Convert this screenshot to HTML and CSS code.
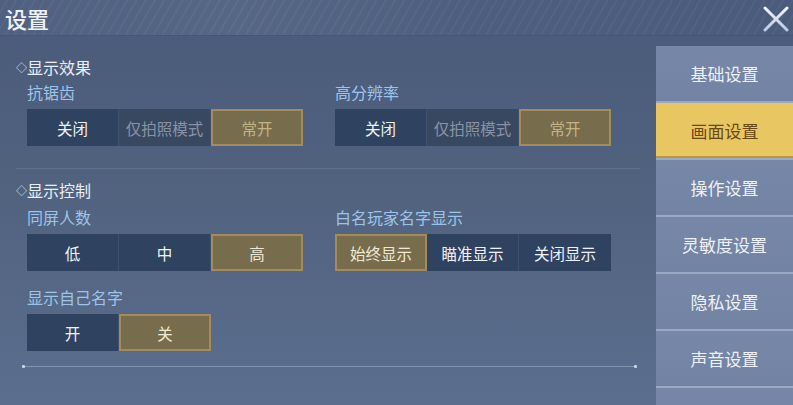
FILE: index.html
```html
<!DOCTYPE html>
<html lang="zh">
<head>
<meta charset="utf-8">
<link rel="stylesheet" href="styles.css">
</head>
<body>
<div class="app">
  <header class="topbar">
    <h1 class="title">设置</h1>
    <button class="close" aria-label="关闭">
      <svg width="26" height="26" viewBox="0 0 26 26">
        <defs>
          <linearGradient id="xg" x1="0" y1="0" x2="0" y2="1">
            <stop offset="0" stop-color="#f2f6fb"/>
            <stop offset="1" stop-color="#b9cbe3"/>
          </linearGradient>
        </defs>
        <path d="M2 2 L24 24 M24 2 L2 24" stroke="url(#xg)" stroke-width="3" stroke-linecap="round" fill="none"/>
      </svg>
    </button>
  </header>
  <div class="main">
    <section class="content">
      <div class="group">
        <h2 class="group-title"><span class="dia">◇</span>显示效果</h2>
        <div class="grid">
          <div class="field">
            <div class="label">抗锯齿</div>
            <div class="seg">
              <span class="opt">关闭</span>
              <span class="opt dis">仅拍照模式</span>
              <span class="opt on dim">常开</span>
            </div>
          </div>
          <div class="field">
            <div class="label">高分辨率</div>
            <div class="seg">
              <span class="opt">关闭</span>
              <span class="opt dis">仅拍照模式</span>
              <span class="opt on dim">常开</span>
            </div>
          </div>
        </div>
      </div>
      <hr class="divider">
      <div class="group">
        <h2 class="group-title"><span class="dia">◇</span>显示控制</h2>
        <div class="grid">
          <div class="field">
            <div class="label">同屏人数</div>
            <div class="seg">
              <span class="opt">低</span>
              <span class="opt">中</span>
              <span class="opt on">高</span>
            </div>
          </div>
          <div class="field">
            <div class="label">白名玩家名字显示</div>
            <div class="seg">
              <span class="opt on">始终显示</span>
              <span class="opt">瞄准显示</span>
              <span class="opt">关闭显示</span>
            </div>
          </div>
          <div class="field">
            <div class="label">显示自己名字</div>
            <div class="seg">
              <span class="opt">开</span>
              <span class="opt on">关</span>
            </div>
          </div>
        </div>
      </div>
      <div class="endline"><i class="dot"></i><i class="dot"></i></div>
    </section>
    <nav class="side">
      <a class="tab">基础设置</a>
      <a class="tab active">画面设置</a>
      <a class="tab">操作设置</a>
      <a class="tab">灵敏度设置</a>
      <a class="tab">隐私设置</a>
      <a class="tab">声音设置</a>
      <a class="tab"></a>
    </nav>
  </div>
</div>
</body>
</html>
```
FILE: styles.css
```css
* { box-sizing: border-box; }
html, body { margin: 0; padding: 0; }
body {
  width: 793px;
  height: 405px;
  overflow: hidden;
  font-family: "Noto Sans CJK SC", "Noto Sans", sans-serif;
  background: linear-gradient(180deg, #4a5b7b 0%, #51627f 45%, #5b6e8d 100%);
  color: #e6ecf4;
}
.app { width: 793px; height: 405px; display: flex; flex-direction: column; overflow: hidden; }
.topbar {
  height: 36px;
  flex: none;
  display: flex;
  align-items: center;
  justify-content: space-between;
  padding: 0 3px 0 5px;
  background:
    repeating-linear-gradient(120deg, rgba(255,255,255,0) 0px, rgba(255,255,255,0) 5px, rgba(255,255,255,0.05) 6px, rgba(255,255,255,0) 8px),
    linear-gradient(90deg, #4f6080 0%, #566786 30%, #4d5e7e 60%, #4a5b7b 100%);
  border-bottom: 1px solid #45567a;
}
.title {
  margin: 0;
  font-size: 22px;
  font-weight: 500;
  line-height: 30px;
  color: #eef2f8;
}
.close {
  border: 0;
  background: none;
  padding: 0;
  width: 28px;
  height: 28px;
  display: flex;
  align-items: center;
  justify-content: center;
  margin-top: 2px;
}
.main { flex: 1; display: flex; min-height: 0; overflow: hidden; }
.content {
  flex: 1;
  padding: 21px 16px 0 16px;
}
.group-title {
  margin: 0;
  font-size: 16px;
  font-weight: 400;
  line-height: 20px;
  color: #e8eef6;
  display: flex;
  align-items: center;
}
.dia { font-size: 11px; width: 11px; line-height: 20px; color: #dfe7f2; }
.grid {
  display: grid;
  grid-template-columns: 308px 1fr;
  padding-left: 11px;
  row-gap: 16px;
}
.field .label {
  font-size: 16px;
  line-height: 20px;
  color: #9cc4ea;
  margin: 7px 0 7px 0;
}
.group:first-child .field .label { margin: 5px 0 7px 0; }
.grid .field:nth-child(n+3) .label { margin-top: 0; }
.seg { display: flex; height: 37px; }
.opt {
  width: 92px;
  height: 37px;
  display: flex;
  align-items: center;
  justify-content: center;
  font-size: 15.5px;
  color: #eef2f8;
  background: #2f4361;
  border-right: 1px solid #3e5170;
}
.opt:last-child { border-right: 0; }
.opt.dis { background: #394861; color: #8892a6; }
.opt.on {
  background: #776d4d;
  border: 2px solid #a38c5a;
  color: #efe9d2;
}
.opt.on.dim { color: #c2b384; }
.divider {
  border: 0;
  height: 1px;
  background: #5e7090;
  margin: 22px 0 11px 0;
}
.endline {
  margin: 15px 3px 0 6px;
  height: 1px;
  background: rgba(150,165,192,0.7);
  display: flex;
  justify-content: space-between;
  align-items: center;
}
.dot { width: 3px; height: 3px; background: #c9d3e2; display: block; border-radius: 1px; }
.side {
  width: 137px;
  flex: none;
  margin-top: 10px;
  display: flex;
  flex-direction: column;
  gap: 2px;
  background: #9aa8c3;
  overflow: hidden;
}
.tab {
  height: 55px;
  flex: none;
  display: flex;
  align-items: center;
  justify-content: center;
  font-size: 17px;
  color: #eef1f7;
  background: linear-gradient(180deg, #7687a7 0%, #7283a4 100%);
}
.tab.active {
  background: #e8c662;
  color: #6a4813;
  box-shadow: inset 0 -2px 0 #b9973f;
}
```
